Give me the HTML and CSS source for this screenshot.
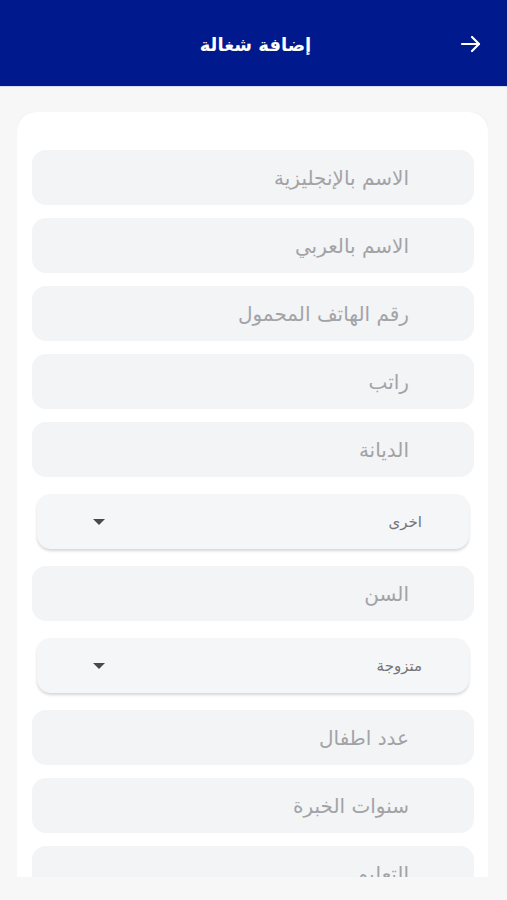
FILE: index.html
```html
<!DOCTYPE html>
<html lang="ar" dir="rtl">
<head>
    <meta charset="UTF-8">
    <meta name="viewport" content="width=device-width, initial-scale=1.0">
    <title>إضافة شغالة</title>
    <link rel="stylesheet" href="styles.css">
</head>
<body>
    <header class="top-bar">
        <button class="back-button" aria-label="رجوع">
            <svg width="24" height="24" viewBox="0 0 24 24" fill="none" stroke="white" stroke-width="2.2" stroke-linecap="round" stroke-linejoin="round">
                <path d="M3 12h17"/>
                <path d="M13 5l7 7-7 7"/>
            </svg>
        </button>
        <h1>إضافة شغالة</h1>
    </header>
    <div class="scroll-area">
        <form class="form-card">
            <input class="field" type="text" placeholder="الاسم بالإنجليزية">
            <input class="field" type="text" placeholder="الاسم بالعربي">
            <input class="field" type="text" inputmode="tel" placeholder="رقم الهاتف المحمول">
            <input class="field" type="text" placeholder="راتب">
            <input class="field" type="text" placeholder="الديانة">
            <div class="dropdown">
                <span>اخرى</span>
                <span class="caret"></span>
            </div>
            <input class="field" type="text" placeholder="السن">
            <div class="dropdown">
                <span>متزوجة</span>
                <span class="caret"></span>
            </div>
            <input class="field" type="text" placeholder="عدد اطفال">
            <input class="field" type="text" placeholder="سنوات الخبرة">
            <input class="field" type="text" placeholder="التعليم">
            <input class="field" type="text" placeholder="الجنسية">
        </form>
    </div>
</body>
</html>
```

FILE: styles.css
```css
body {
    margin: 0;
    background-color: #f7f7f8;
    font-family: "DejaVu Sans", sans-serif;
    height: 900px;
    overflow: hidden;
}
.top-bar {
    height: 87px;
    background-color: #00198c;
    display: flex;
    align-items: center;
    position: relative;
    border-bottom: 1px solid #d8dcef;
    box-sizing: border-box;
    padding-top: 3px;
}
.top-bar h1 {
    flex: 1;
    margin: 0;
    text-align: center;
    color: white;
    font-size: 18px;
    font-weight: bold;
    padding-left: 4px;
}
.back-button {
    position: absolute;
    right: 24px;
    top: 32px;
    background: none;
    border: none;
    padding: 0;
    width: 24px;
    height: 24px;
    cursor: pointer;
}
.scroll-area {
    height: 765px;
    margin: 25px 19px 0 17px;
    overflow: hidden;
}
.form-card {
    background-color: white;
    border-radius: 20px;
    padding: 38px 14px 30px 15px;
    display: flex;
    flex-direction: column;
    gap: 13px;
    box-shadow: 0 0 4px rgba(0, 0, 0, 0.03);
}
.field {
    height: 55px;
    border: none;
    border-radius: 14px;
    background-color: #f3f4f6;
    padding: 0 65px 0 20px;
    font-family: inherit;
    font-size: 20px;
    color: #555;
    outline: none;
    box-sizing: border-box;
    width: 100%;
}
.field::placeholder {
    color: #a2a3a6;
}
.dropdown {
    height: 55px;
    margin: 4px 5px;
    border-radius: 14px;
    background-color: #f5f6f7;
    box-shadow: 0 2px 3px rgba(0, 0, 0, 0.16);
    display: flex;
    align-items: center;
    justify-content: space-between;
    padding: 0 47px 0 56px;
    font-size: 15px;
    color: #737478;
    box-sizing: border-box;
}
.caret {
    width: 0;
    height: 0;
    border-left: 6px solid transparent;
    border-right: 6px solid transparent;
    border-top: 6px solid #4a4a4d;
}
```
